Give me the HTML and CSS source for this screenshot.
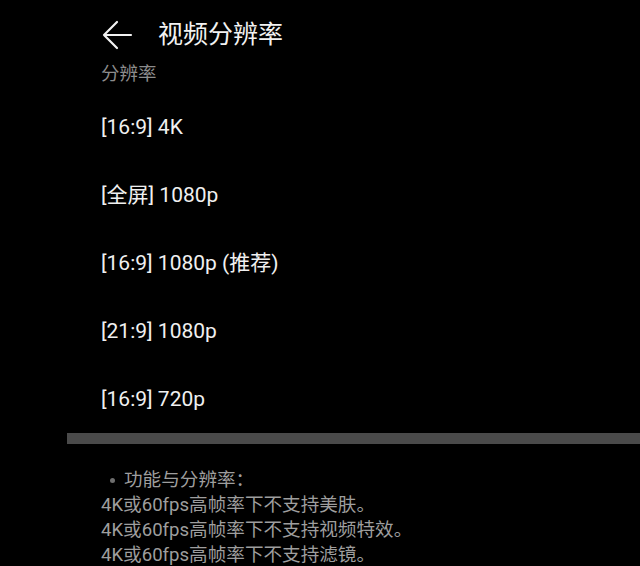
FILE: index.html
```html
<!DOCTYPE html>
<html lang="zh">
<head>
<meta charset="utf-8">
<link rel="stylesheet" href="styles.css">
</head>
<body>
<div class="page">
  <header class="header">
    <svg class="back" width="32" height="32" viewBox="0 0 32 32">
      <path d="M16 3 L3 16 L16 29 M3 16 H30" fill="none" stroke="#f2f2f2" stroke-width="2.2" stroke-linecap="round" stroke-linejoin="round"/>
    </svg>
    <h1 class="title">视频分辨率</h1>
  </header>
  <div class="label">分辨率</div>
  <ul class="list">
    <li class="row">[16:9] 4K</li>
    <li class="row">[全屏] 1080p</li>
    <li class="row">[16:9] 1080p (推荐)</li>
    <li class="row">[21:9] 1080p</li>
    <li class="row">[16:9] 720p</li>
  </ul>
  <div class="bar"></div>
  <div class="notes">
    <div class="note-head"><span class="dot"></span>功能与分辨率：</div>
    <div class="note">4K或60fps高帧率下不支持美肤。</div>
    <div class="note">4K或60fps高帧率下不支持视频特效。</div>
    <div class="note">4K或60fps高帧率下不支持滤镜。</div>
  </div>
</div>
</body>
</html>
```

FILE: styles.css
```css
html, body {
  margin: 0;
  padding: 0;
  background: #000;
}
body {
  font-family: Roboto, "Noto Sans CJK SC", sans-serif;
  color: #f2f2f2;
  width: 640px;
  height: 566px;
  overflow: hidden;
}
.page {
  display: flex;
  flex-direction: column;
}
.header {
  display: flex;
  align-items: center;
  height: 62px;
  padding: 8px 0 0 101px;
  box-sizing: border-box;
}
.back {
  display: block;
}
.title {
  margin: 0 0 0 25px;
  font-size: 25px;
  font-weight: 400;
  line-height: 34px;
  color: #f2f2f2;
}
.label {
  padding-left: 101px;
  font-size: 18.5px;
  line-height: 25px;
  height: 25px;
  margin-bottom: 6px;
  color: #8c8c8c;
}
.list {
  list-style: none;
  margin: 0;
  padding: 0;
}
.row {
  height: 68px;
  line-height: 68px;
  padding-left: 101px;
  font-size: 21px;
  color: #f0f0f0;
}
.bar {
  margin-left: 67px;
  height: 11px;
  background: #4a4a4a;
}
.notes {
  padding: 24px 0 0 101px;
  font-size: 18.6px;
  line-height: 25px;
  color: #9e9e9e;
}
.note-head {
  display: flex;
  align-items: center;
  padding-left: 9px;
}
.dot {
  width: 5px;
  height: 5px;
  border-radius: 50%;
  background: #6e6e6e;
  margin-right: 9px;
}
```
